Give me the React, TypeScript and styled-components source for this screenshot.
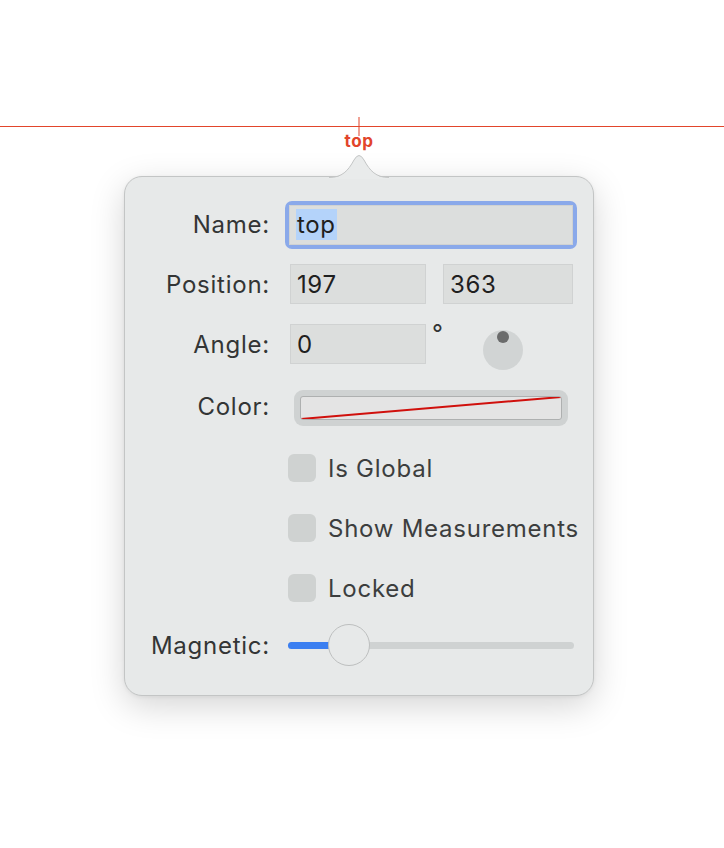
import React from 'react';
import styled, { createGlobalStyle } from 'styled-components';

const GlobalStyle = createGlobalStyle`
  html, body {
    margin          : 0;
    padding         : 0;
    background-color: #ffffff;
  }
  body {
    font-family: Inter, 'Liberation Sans', Arial, sans-serif;
  }
`;

const Canvas = styled.section`
  width      : 724px;
  height     : 848px;
  padding-top: 117px;
  box-sizing : border-box;
  overflow   : hidden;
`;

const GuideSvg = styled.svg`
  display      : block;
  margin-bottom: -3px;
`;

const GuideTag = styled.div`
  margin-left   : 124px;
  width         : 470px;
  text-align    : center;
  font-size     : 17px;
  line-height   : 17px;
  font-weight   : 700;
  letter-spacing: 0.6px;
  color         : #e2452b;
`;

const Popover = styled.div`
  position        : relative;
  margin-top      : 26px;
  margin-left     : 124px;
  width           : 470px;
  box-sizing      : border-box;
  padding         : 18px 18px 23px 20px;
  background-color: #e7e9e9;
  border          : 1px solid #c3c5c5;
  border-radius   : 18px;
  box-shadow      : 0 10px 34px rgba(0, 0, 0, 0.17), 0 1px 4px rgba(0, 0, 0, 0.06);
`;

const Arrow = styled.svg`
  position : absolute;
  top      : -25px;
  left     : 50%;
  transform: translateX(-50%);
`;

const Row = styled.div<{ $h: number }>`
  display              : grid;
  grid-template-columns: 125px 1fr;
  column-gap           : 18px;
  align-items          : center;
  height               : ${p => p.$h}px;
`;

const Label = styled.span`
  text-align    : right;
  font-size     : 24px;
  letter-spacing: 0.75px;
  color         : #333535;
  white-space   : nowrap;
`;

const FocusRing = styled.div`
  width        : 292px;
  margin-left  : -3px;
  padding      : 4px;
  border-radius: 7px;
  background   : #8aa9ea;
  box-sizing   : border-box;
`;

const Field = styled.div<{ $w?: number }>`
  display         : flex;
  align-items     : center;
  width           : ${p => (p.$w ? `${p.$w}px` : '100%')};
  height          : 40px;
  box-sizing      : border-box;
  padding-left    : 6px;
  background-color: #dcdedd;
  border          : 1px solid #d0d2d2;
  font-size       : 24px;
  letter-spacing  : 0.6px;
  color           : #1f2020;
`;

const Selected = styled.span`
  background-color: #b4d3fa;
  padding         : 3px 1px;
  line-height     : 25px;
`;

const Pair = styled.div`
  display    : flex;
  gap        : 17px;
  margin-left: 2px;
`;

const AngleBox = styled.div`
  display    : flex;
  align-items: center;
  margin-left: 2px;
`;

const Degree = styled.span`
  align-self : flex-start;
  margin     : 4px 0 0 6px;
  font-size  : 24px;
  line-height: 24px;
  color      : #333535;
`;

const Knob = styled.div`
  position        : relative;
  width           : 40px;
  height          : 40px;
  margin          : 12px 0 0 40px;
  border-radius   : 50%;
  background-color: #d1d4d4;
`;

const KnobDot = styled.div`
  position        : absolute;
  top             : 1px;
  left            : 14px;
  width           : 12px;
  height          : 12px;
  border-radius   : 50%;
  background-color: #6a6b6b;
`;

const Well = styled.div`
  width           : 274px;
  height          : 36px;
  margin          : 4px 0 0 6px;
  box-sizing      : border-box;
  padding         : 6px;
  border-radius   : 9px;
  background-color: #cfd2d2;
`;

const Swatch = styled.div`
  height          : 100%;
  box-sizing      : border-box;
  border          : 1px solid #aeb0b0;
  border-radius   : 3px;
  background-color: #e4e4e4;
  overflow        : hidden;
`;

const Check = styled.label`
  display       : flex;
  align-items   : center;
  gap           : 12px;
  font-size     : 24px;
  letter-spacing: 0.75px;
  white-space   : nowrap;
  color         : #3c3e3e;
`;

const Box = styled.span`
  flex            : none;
  width           : 28px;
  height          : 28px;
  border-radius   : 6px;
  background-color: #cfd2d1;
`;

const Track = styled.div`
  position        : relative;
  height          : 7px;
  width           : 286px;
  border-radius   : 4px;
  background-color: #cfd2d2;
`;

const TrackFill = styled.div`
  position        : absolute;
  left            : 0;
  top             : 0;
  bottom          : 0;
  border-radius   : 4px 0 0 4px;
  background-color: #3b7ff1;
`;

const Thumb = styled.div`
  position        : absolute;
  top             : 50%;
  width           : 42px;
  height          : 42px;
  box-sizing      : border-box;
  transform       : translate(-50%, -50%);
  border-radius   : 50%;
  background-color: #e7e9e9;
  border          : 1.5px solid #bdbfbf;
`;

const Empty = styled.span``;

const App = () => {
  const magnetic = 61; // thumb centre, px from track start
  return (
    <>
      <GlobalStyle />
      <Canvas>
        <GuideSvg width="724" height="19" viewBox="0 0 724 19">
          <rect x="0" y="9" width="724" height="1" fill="#e2452b" />
          <rect x="358.5" y="0" width="1" height="19" fill="#e2452b" />
        </GuideSvg>
        <GuideTag>top</GuideTag>
        <Popover>
          <Arrow width="60" height="27" viewBox="0 0 60 27">
            <path d="M0 26 C 13 26, 19 19, 25 8 Q 30 -1 35 8 C 41 19, 47 26, 60 26 L 60 27 L 0 27 Z" fill="#e9ebeb" />
            <path d="M0 25.5 C 13 25.5, 19 19, 25 8 Q 30 -1 35 8 C 41 19, 47 25.5, 60 25.5" fill="none" stroke="#c3c5c5" strokeWidth="1" />
          </Arrow>

          <Row $h={59}>
            <Label>Name:</Label>
            <FocusRing>
              <Field><Selected>top</Selected></Field>
            </FocusRing>
          </Row>

          <Row $h={60}>
            <Label>Position:</Label>
            <Pair>
              <Field $w={136}>197</Field>
              <Field $w={130}>363</Field>
            </Pair>
          </Row>

          <Row $h={60}>
            <Label>Angle:</Label>
            <AngleBox>
              <Field $w={136}>0</Field>
              <Degree>°</Degree>
              <Knob><KnobDot /></Knob>
            </AngleBox>
          </Row>

          <Row $h={64}>
            <Label>Color:</Label>
            <Well>
              <Swatch>
                <svg width="100%" height="100%" viewBox="0 0 100 10" preserveAspectRatio="none">
                  <line x1="0" y1="10" x2="100" y2="0" stroke="#d0100c" strokeWidth="2" vectorEffect="non-scaling-stroke" />
                </svg>
              </Swatch>
            </Well>
          </Row>

          {['Is Global', 'Show Measurements', 'Locked'].map(t => (
            <Row $h={60} key={t}>
              <Empty />
              <Check><Box />{t}</Check>
            </Row>
          ))}

          <Row $h={54}>
            <Label>Magnetic:</Label>
            <Track>
              <TrackFill style={{ width: magnetic - 18 }} />
              <Thumb style={{ left: magnetic }} />
            </Track>
          </Row>
        </Popover>
      </Canvas>
    </>
  );
};

export default App;
